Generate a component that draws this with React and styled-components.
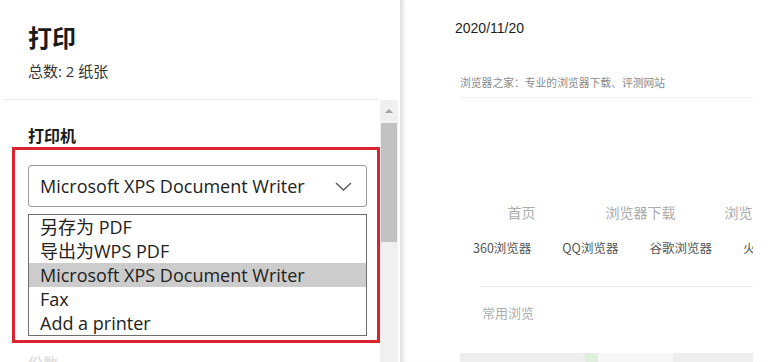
import React from "react";
import styled, { createGlobalStyle } from "styled-components";

const GlobalStyle = createGlobalStyle`
  html, body {
    margin: 0;
    padding: 0;
    background: #fff;
    overflow: hidden;
  }
  body {
    font-family: "Open Sans", "Noto Sans CJK SC", sans-serif;
  }
`;

const CJK = `"Open Sans", "Noto Sans CJK SC", sans-serif`;

const Page = styled.div`
  display: flex;
  width: 768px;
  height: 362px;
  overflow: hidden;
`;

const Sidebar = styled.div`
  width: 400px;
  flex-shrink: 0;
  display: flex;
  flex-direction: column;
  background: #fff;
`;

const Header = styled.div`
  height: 100px;
  margin: 0 22px 0 5px;
  padding: 22px 0 0 23px;
  box-sizing: border-box;
  border-bottom: 1px solid #e6e6e6;
`;

const Title = styled.div`
  font-family: ${CJK};
  font-size: 24px;
  line-height: 32px;
  font-weight: 700;
  color: #1a1a1a;
`;

const Subtitle = styled.div`
  margin-top: 7px;
  font-family: ${CJK};
  font-size: 15px;
  line-height: 20px;
  color: #333;
`;

const ScrollArea = styled.div`
  flex: 1;
  display: flex;
  min-height: 0;
`;

const Content = styled.div`
  width: 380px;
  box-sizing: border-box;
  padding: 25px 0 0 28px;
  overflow: hidden;
`;

const SectionLabel = styled.div`
  font-family: ${CJK};
  font-size: 16px;
  line-height: 22px;
  font-weight: 700;
  color: #1a1a1a;
`;

const Highlight = styled.div`
  margin-left: -16px;
  width: 368px;
  box-sizing: border-box;
  border: 3px solid #d9232e;
  padding: 15px 10px 4px 13px;
`;

const Select = styled.div`
  height: 42px;
  box-sizing: border-box;
  border: 1px solid #9c9c9c;
  border-radius: 3px;
  display: flex;
  align-items: center;
  justify-content: space-between;
  padding: 0 14px 0 11px;
  font-size: 18px;
  color: #222;
`;

const OptionList = styled.div`
  margin-top: 7px;
  border: 1px solid #6e6e6e;
`;

const Option = styled.div`
  height: 24px;
  line-height: 24px;
  padding-left: 11px;
  font-size: 18px;
  color: #222;
  white-space: nowrap;
  background: ${(p) => (p.$active ? "#cccccc" : "transparent")};
`;

const FadedLabel = styled.div`
  margin-top: 9px;
  font-size: 15px;
  color: #e2e2e2;
  font-weight: 700;
`;

const Track = styled.div`
  width: 18px;
  background: #f0f0f0;
  display: flex;
  flex-direction: column;
  align-items: center;
`;

const Arrow = styled.div`
  margin-top: 9px;
  width: 0;
  height: 0;
  border-left: 4px solid transparent;
  border-right: 4px solid transparent;
  border-bottom: 4px solid #a3a3a3;
`;

const Thumb = styled.div`
  margin-top: 10px;
  width: 16px;
  height: 119px;
  background: #c2c2c2;
`;

const Gutter = styled.div`
  width: 2px;
`;

const Preview = styled.div`
  flex: 1;
  background: #fff;
  box-shadow: inset 7px 0 5px -4px rgba(0, 0, 0, 0.14);
  padding: 19px 15px 0 55px;
  overflow: hidden;
`;

const DateText = styled.div`
  font-family: "Liberation Sans", Arial, sans-serif;
  font-size: 14px;
  line-height: 18px;
  color: #1e1e1e;
`;

const SiteLine = styled.div`
  margin: 37px 0 0 5px;
  padding-bottom: 7px;
  border-bottom: 1px solid #ededed;
  font-family: "Noto Sans CJK SC", sans-serif;
  font-size: 10.8px;
  line-height: 16px;
  color: #8a8a8a;
  white-space: nowrap;
`;

const Nav = styled.div`
  margin: 104px 0 0 7px;
  display: grid;
  grid-template-columns: repeat(3, 119px);
  overflow: hidden;
`;

const NavItem = styled.div`
  text-align: center;
  font-family: "Noto Sans CJK SC", sans-serif;
  font-size: 14px;
  line-height: 20px;
  color: #ababab;
  white-space: nowrap;
`;

const Tags = styled.div`
  margin: 18px 0 0 18px;
  display: flex;
  gap: 31px;
  overflow: hidden;
  white-space: nowrap;
`;

const Tag = styled.div`
  font-family: "Noto Sans CJK SC", sans-serif;
  font-size: 12.5px;
  line-height: 16px;
  color: #555;
`;

const Rule = styled.div`
  margin: 30px 0 0 25px;
  border-top: 1px solid #ececec;
`;

const Muted = styled.div`
  margin: 17px 0 0 27px;
  font-family: "Noto Sans CJK SC", sans-serif;
  font-size: 13px;
  line-height: 18px;
  color: #adadad;
`;

const Strip = styled.div`
  margin: 31px 0 0 5px;
  height: 10px;
  background: #eeeeee;
  display: flex;
`;

const StripBit = styled.div`
  width: ${(p) => p.$w}px;
  margin-left: ${(p) => p.$left}px;
  background: ${(p) => p.$bg};
`;

const Chevron = () => (
  <svg width="17" height="9" viewBox="0 0 17 9" fill="none">
    <polyline points="1,1 8.5,8 16,1" stroke="#555" strokeWidth="1.3" />
  </svg>
);

const options = [
  "另存为 PDF",
  "导出为WPS PDF",
  "Microsoft XPS Document Writer",
  "Fax",
  "Add a printer",
];

export default function App() {
  return (
    <>
      <GlobalStyle />
      <Page>
        <Sidebar>
          <Header>
            <Title>打印</Title>
            <Subtitle>总数: 2 纸张</Subtitle>
          </Header>
          <ScrollArea>
            <Content>
              <SectionLabel>打印机</SectionLabel>
              <Highlight>
                <Select>
                  <span>Microsoft XPS Document Writer</span>
                  <Chevron />
                </Select>
                <OptionList>
                  {options.map((o, i) => (
                    <Option key={o} $active={i === 2}>
                      {o}
                    </Option>
                  ))}
                </OptionList>
              </Highlight>
              <FadedLabel>份数</FadedLabel>
            </Content>
            <Track>
              <Arrow />
              <Thumb />
            </Track>
            <Gutter />
          </ScrollArea>
        </Sidebar>
        <Preview>
          <DateText>2020/11/20</DateText>
          <SiteLine>浏览器之家：专业的浏览器下载、评测网站</SiteLine>
          <Nav>
            <NavItem>首页</NavItem>
            <NavItem>浏览器下载</NavItem>
            <NavItem>浏览器资讯</NavItem>
          </Nav>
          <Tags>
            <Tag>360浏览器</Tag>
            <Tag>QQ浏览器</Tag>
            <Tag>谷歌浏览器</Tag>
            <Tag>火狐浏览器</Tag>
          </Tags>
          <Rule />
          <Muted>常用浏览</Muted>
          <Strip>
            <StripBit $left={125} $w={13} $bg="#dfeedd" />
            <StripBit $left={0} $w={75} $bg="#f6f6f6" />
          </Strip>
        </Preview>
      </Page>
    </>
  );
}
